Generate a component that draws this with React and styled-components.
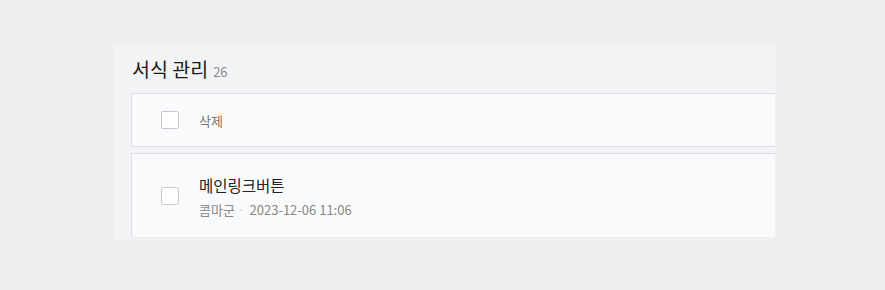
import React from 'react';
import styled, { createGlobalStyle } from 'styled-components';

const GlobalStyle = createGlobalStyle`
  body {
    margin: 0;
    background: #eeefee;
    font-family: "Noto Sans CJK KR", "Noto Sans", sans-serif;
  }
`;

const Page = styled.div`
  padding: 46px 0 0 114px;
`;

const Panel = styled.section`
  width: 661px;
  height: 193px;
  background: #f2f3f4;
  overflow: hidden;
  padding: 0 0 0 17px;
  box-sizing: border-box;
`;

const TitleBar = styled.div`
  display: flex;
  align-items: baseline;
  gap: 5px;
  padding: 10px 0 11px 1px;
  height: 26px;
`;

const Title = styled.h2`
  margin: 0;
  font-size: 19.5px;
  line-height: 26px;
  font-weight: 400;
  color: #1a1a1a;
`;

const Count = styled.span`
  font-size: 13px;
  color: #8a8a8a;
`;

const Row = styled.div`
  display: flex;
  align-items: center;
  gap: 20px;
  margin-right: -20px;
  height: ${p => p.$height}px;
  padding-left: 29px;
  background: #f9fafb;
  border: 1px solid #dddee5;
  border-bottom-color: ${p => p.$bottom || '#dddee5'};
  margin-bottom: 6px;
`;

const Check = styled.span`
  width: 18px;
  height: 18px;
  flex: none;
  box-sizing: border-box;
  border: 1px solid #c9cad0;
  border-radius: 2px;
  background: #fff;
`;

const Action = styled.span`
  font-size: 13px;
  color: #7a7470;
`;

const Info = styled.div`
  display: flex;
  flex-direction: column;
  gap: 4px;
  margin-top: 2px;
`;

const Name = styled.div`
  font-size: 15.5px;
  line-height: 22px;
  color: #222;
`;

const Meta = styled.div`
  display: flex;
  align-items: center;
  font-size: 13px;
  line-height: 20px;
  color: #888;
`;

const Dot = styled.span`
  color: #c8c8c8;
  font-size: 10px;
  margin: 0 6px 0 3px;
`;

export default function App() {
  return (
    <>
      <GlobalStyle />
      <Page>
        <Panel>
          <TitleBar>
            <Title>서식 관리</Title>
            <Count>26</Count>
          </TitleBar>
          <Row $height={52}>
            <Check />
            <Action>삭제</Action>
          </Row>
          <Row $height={83} $bottom="#ebecf0">
            <Check />
            <Info>
              <Name>메인링크버튼</Name>
              <Meta>
                콤마군<Dot>·</Dot>2023-12-06 11:06
              </Meta>
            </Info>
          </Row>
        </Panel>
      </Page>
    </>
  );
}
